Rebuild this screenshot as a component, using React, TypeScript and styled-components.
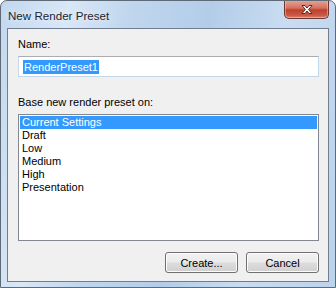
import styled, { createGlobalStyle } from 'styled-components'

const GlobalStyle = createGlobalStyle`
  html, body {
    margin: 0;
    padding: 0;
    background: #ffffff;
  }
`

const presets = ['Current Settings', 'Draft', 'Low', 'Medium', 'High', 'Presentation']

const Window = styled.div`
  width: 336px;
  height: 288px;
  box-sizing: border-box;
  display: flex;
  flex-direction: column;
  border: 1px solid #5e6a78;
  border-radius: 7px 7px 0 0;
  background: linear-gradient(
      100deg,
      #c2d8ef 0%,
      #d9e7f6 18%,
      #c0d6ee 34%,
      #b3cde9 55%,
      #c9dcf1 75%,
      #bcd3ec 100%
    );
  font-family: 'Liberation Sans', Arial, sans-serif;
  overflow: hidden;
`

const TitleBar = styled.div`
  height: 27px;
  display: flex;
  flex-direction: row;
  align-items: flex-start;
  justify-content: space-between;
  padding: 0 6px 0 7px;
`

const Title = styled.span`
  font-family: 'Liberation Sans', Arial, sans-serif;
  font-size: 11.6px;
  line-height: 14px;
  margin-top: 8px;
  color: #1b2633;
  text-shadow: 0 0 6px rgba(255, 255, 255, 0.9);
`

const CloseButton = styled.div`
  width: 45px;
  height: 19px;
  margin-top: -1px;
  box-sizing: border-box;
  display: flex;
  align-items: center;
  justify-content: center;
  border: 1px solid #6d3630;
  border-top: none;
  border-radius: 0 0 5px 5px;
  background: linear-gradient(180deg, #e5a89a 0%, #d5705f 45%, #c0402c 55%, #c75a45 85%, #d98672 100%);
  box-shadow: inset 0 0 0 1px rgba(255, 210, 200, 0.45);
`

const Client = styled.div`
  flex: 1;
  margin: 0 6px 5px 6px;
  box-sizing: border-box;
  display: flex;
  flex-direction: column;
  border: 1px solid #707e90;
  background: #f0f0f0;
  padding: 8px 9px 0 10px;
  color: #000000;
  font-size: 11px;
`

const Label = styled.div`
  line-height: 14px;
  height: 14px;
  margin-bottom: ${({ $gap }: { $gap: number }) => $gap}px;
`

const TextBox = styled.div`
  height: 21px;
  box-sizing: border-box;
  display: flex;
  align-items: center;
  border: 1px solid #abadb3;
  border-color: #abadb3 #c2d7ea #c2d7ea #c9d9e8;
  background: #ffffff;
  padding-left: 4px;
  margin-bottom: 18px;
`

const Selected = styled.span`
  background: #3399ff;
  color: #ffffff;
  line-height: 14px;
  padding: 0 1px;
`

const ListBox = styled.div`
  height: 127px;
  box-sizing: border-box;
  border: 1px solid #828790;
  background: #ffffff;
  padding: 1px;
  display: flex;
  flex-direction: column;
`

const ListItem = styled.div<{ $active?: boolean }>`
  height: 13px;
  line-height: 13px;
  padding-left: 2px;
  background: ${({ $active }) => ($active ? '#3399ff' : 'transparent')};
  color: ${({ $active }) => ($active ? '#ffffff' : '#000000')};
  white-space: nowrap;
`

const ButtonRow = styled.div`
  display: flex;
  flex-direction: row;
  justify-content: flex-end;
  gap: 8px;
  margin-top: 11px;
`

const Button = styled.div`
  width: 73px;
  height: 21px;
  box-sizing: border-box;
  display: flex;
  align-items: center;
  justify-content: center;
  border: 1px solid #707070;
  border-radius: 3px;
  background: linear-gradient(180deg, #f2f2f2 0%, #ebebeb 48%, #dddddd 52%, #cfcfcf 100%);
  box-shadow: inset 0 0 0 1px #fcfcfc;
  font-size: 11px;
  color: #000000;
`

const CloseGlyph = () => (
  <svg width="14" height="11" viewBox="0 0 14 11">
    <path
      d="M2 1.5 L5 1.5 L7 4 L9 1.5 L12 1.5 L8.6 5.5 L12 9.5 L9 9.5 L7 7 L5 9.5 L2 9.5 L5.4 5.5 Z"
      fill="#ffffff"
      stroke="#5a2a24"
      strokeWidth="1"
      strokeLinejoin="round"
    />
  </svg>
)

export default function App() {
  return (
    <>
      <GlobalStyle />
      <Window>
        <TitleBar>
          <Title>New Render Preset</Title>
          <CloseButton>
            <CloseGlyph />
          </CloseButton>
        </TitleBar>
        <Client>
          <Label $gap={5}>Name:</Label>
          <TextBox>
            <Selected>RenderPreset1</Selected>
          </TextBox>
          <Label $gap={5}>Base new render preset on:</Label>
          <ListBox>
            {presets.map((name, index) => (
              <ListItem key={name} $active={index === 0}>
                {name}
              </ListItem>
            ))}
          </ListBox>
          <ButtonRow>
            <Button>Create...</Button>
            <Button>Cancel</Button>
          </ButtonRow>
        </Client>
      </Window>
    </>
  )
}
